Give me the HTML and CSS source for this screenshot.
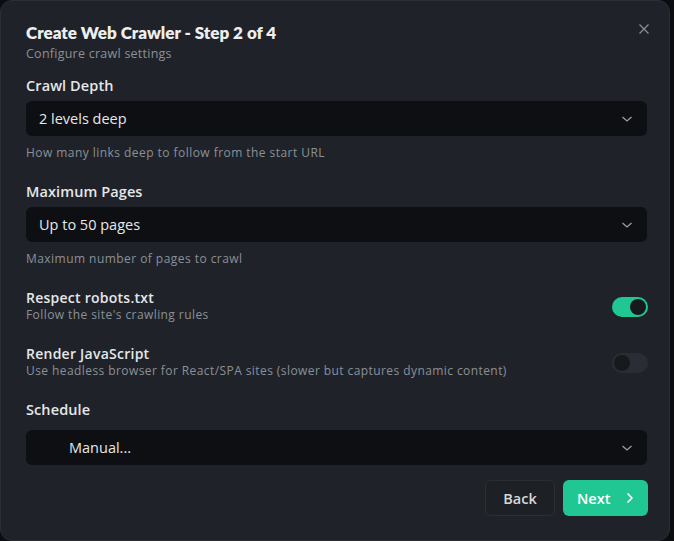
FILE: index.html
```html
<!DOCTYPE html>
<html>
<head>
<meta charset="utf-8">
<link rel="stylesheet" href="styles.css">
</head>
<body>
<div class="dialog">
  <button class="close" aria-label="Close">
    <svg width="12" height="12" viewBox="0 0 12 12"><path d="M1.5 1.5L10.5 10.5M10.5 1.5L1.5 10.5" stroke="#8b9097" stroke-width="1.2" fill="none"/></svg>
  </button>
  <h1 class="title">Create Web Crawler - Step 2 of 4</h1>
  <p class="subtitle">Configure crawl settings</p>

  <div class="field">
    <label class="label">Crawl Depth</label>
    <div class="select"><span>2 levels deep</span>
      <svg class="chev" width="12" height="8" viewBox="0 0 12 8"><path d="M1.5 2L6 6L10.5 2" stroke="#9aa0a8" stroke-width="1.3" fill="none"/></svg>
    </div>
    <p class="help">How many links deep to follow from the start URL</p>
  </div>

  <div class="field">
    <label class="label">Maximum Pages</label>
    <div class="select"><span>Up to 50 pages</span>
      <svg class="chev" width="12" height="8" viewBox="0 0 12 8"><path d="M1.5 2L6 6L10.5 2" stroke="#9aa0a8" stroke-width="1.3" fill="none"/></svg>
    </div>
    <p class="help">Maximum number of pages to crawl</p>
  </div>

  <div class="toggle-row first">
    <div class="toggle-text">
      <div class="toggle-title">Respect robots.txt</div>
      <div class="toggle-sub">Follow the site's crawling rules</div>
    </div>
    <span class="switch on"><span class="knob"></span></span>
  </div>

  <div class="toggle-row">
    <div class="toggle-text">
      <div class="toggle-title">Render JavaScript</div>
      <div class="toggle-sub">Use headless browser for React/SPA sites (slower but captures dynamic content)</div>
    </div>
    <span class="switch"><span class="knob"></span></span>
  </div>

  <div class="field schedule">
    <label class="label">Schedule</label>
    <div class="select indent"><span>Manual...</span>
      <svg class="chev" width="12" height="8" viewBox="0 0 12 8"><path d="M1.5 2L6 6L10.5 2" stroke="#9aa0a8" stroke-width="1.3" fill="none"/></svg>
    </div>
  </div>

  <div class="actions">
    <button class="btn back">Back</button>
    <button class="btn next">Next
      <svg width="8" height="12" viewBox="0 0 8 12"><path d="M2 2L6 6L2 10" stroke="#ffffff" stroke-width="1.7" fill="none" stroke-linecap="round" stroke-linejoin="round"/></svg>
    </button>
  </div>
</div>
</body>
</html>
```

FILE: styles.css
```css
* { box-sizing: border-box; }
html, body { margin: 0; padding: 0; }
body {
  background: #0b0d10;
  width: 674px;
  height: 541px;
  overflow: hidden;
  font-family: "Open Sans", "Noto Sans", sans-serif;
  color: #e6e7e9;
}
.dialog {
  position: relative;
  width: 670px;
  height: 541px;
  background: #1f2329;
  border: 1px solid #2a2e35;
  border-radius: 12px;
  padding: 21px 22px 0 25px;
}
.close {
  position: absolute;
  top: 21px;
  right: 18px;
  width: 14px;
  height: 14px;
  padding: 1px;
  border: 0;
  background: none;
  display: flex;
  align-items: center;
  justify-content: center;
}
.title {
  margin: 0;
  font-family: "Lato", sans-serif;
  font-weight: 800;
  font-size: 17px;
  line-height: 22px;
  color: #eeeeee;
}
.subtitle {
  margin: 1px 0 0;
  font-size: 12.5px;
  line-height: 18px;
  letter-spacing: 0.25px;
  color: #8b9098;
}
.field { margin-top: 13px; }
.field + .field { margin-top: 21px; }
.label {
  display: block;
  font-size: 14.5px;
  font-weight: 600;
  line-height: 20px;
  letter-spacing: 0.1px;
  color: #e6e7e9;
}
.select {
  margin-top: 5px;
  height: 35px;
  border-radius: 6px;
  background: #0d0f12;
  display: flex;
  align-items: center;
  justify-content: space-between;
  padding: 0 14px 0 13px;
  font-size: 14.5px;
  color: #e6e7e9;
}
.select.indent { padding-left: 43px; }
.help {
  margin: 9px 0 0;
  font-size: 12px;
  line-height: 16px;
  letter-spacing: 0.45px;
  color: #8b9098;
}
.toggle-row {
  display: flex;
  align-items: center;
  justify-content: space-between;
  margin-top: 22px;
  margin-right: -1px;
}
.toggle-row.first { margin-top: 22px; }
.toggle-title {
  font-size: 14px;
  font-weight: 600;
  line-height: 18px;
  letter-spacing: 0.25px;
  color: #e6e7e9;
}
.toggle-sub {
  font-size: 12px;
  line-height: 16px;
  letter-spacing: 0.42px;
  color: #8b9098;
}
.switch {
  width: 36px;
  height: 20px;
  border-radius: 10px;
  background: #2a2e34;
  display: flex;
  align-items: center;
  padding: 2px;
  margin-top: 2px;
}
.switch .knob {
  width: 16px;
  height: 16px;
  border-radius: 50%;
  background: #17191d;
}
.switch.on { background: #20c792; justify-content: flex-end; }
.schedule { margin-top: 21px; }
.schedule .select { margin-top: 10px; }
.actions {
  display: flex;
  justify-content: flex-end;
  gap: 8px;
  margin-top: 15px;
  margin-right: -1px;
}
.btn {
  height: 36px;
  border-radius: 6px;
  font-family: "Open Sans", sans-serif;
  font-size: 14.5px;
  font-weight: 600;
  display: flex;
  align-items: center;
  border: 1px solid transparent;
}
.back {
  width: 70px;
  justify-content: center;
  background: #1d2126;
  border-color: #2b2f36;
  color: #d8d9db;
}
.next {
  width: 85px;
  background: #20c792;
  color: #ffffff;
  padding: 0 0 0 13px;
  gap: 16px;
}
```
